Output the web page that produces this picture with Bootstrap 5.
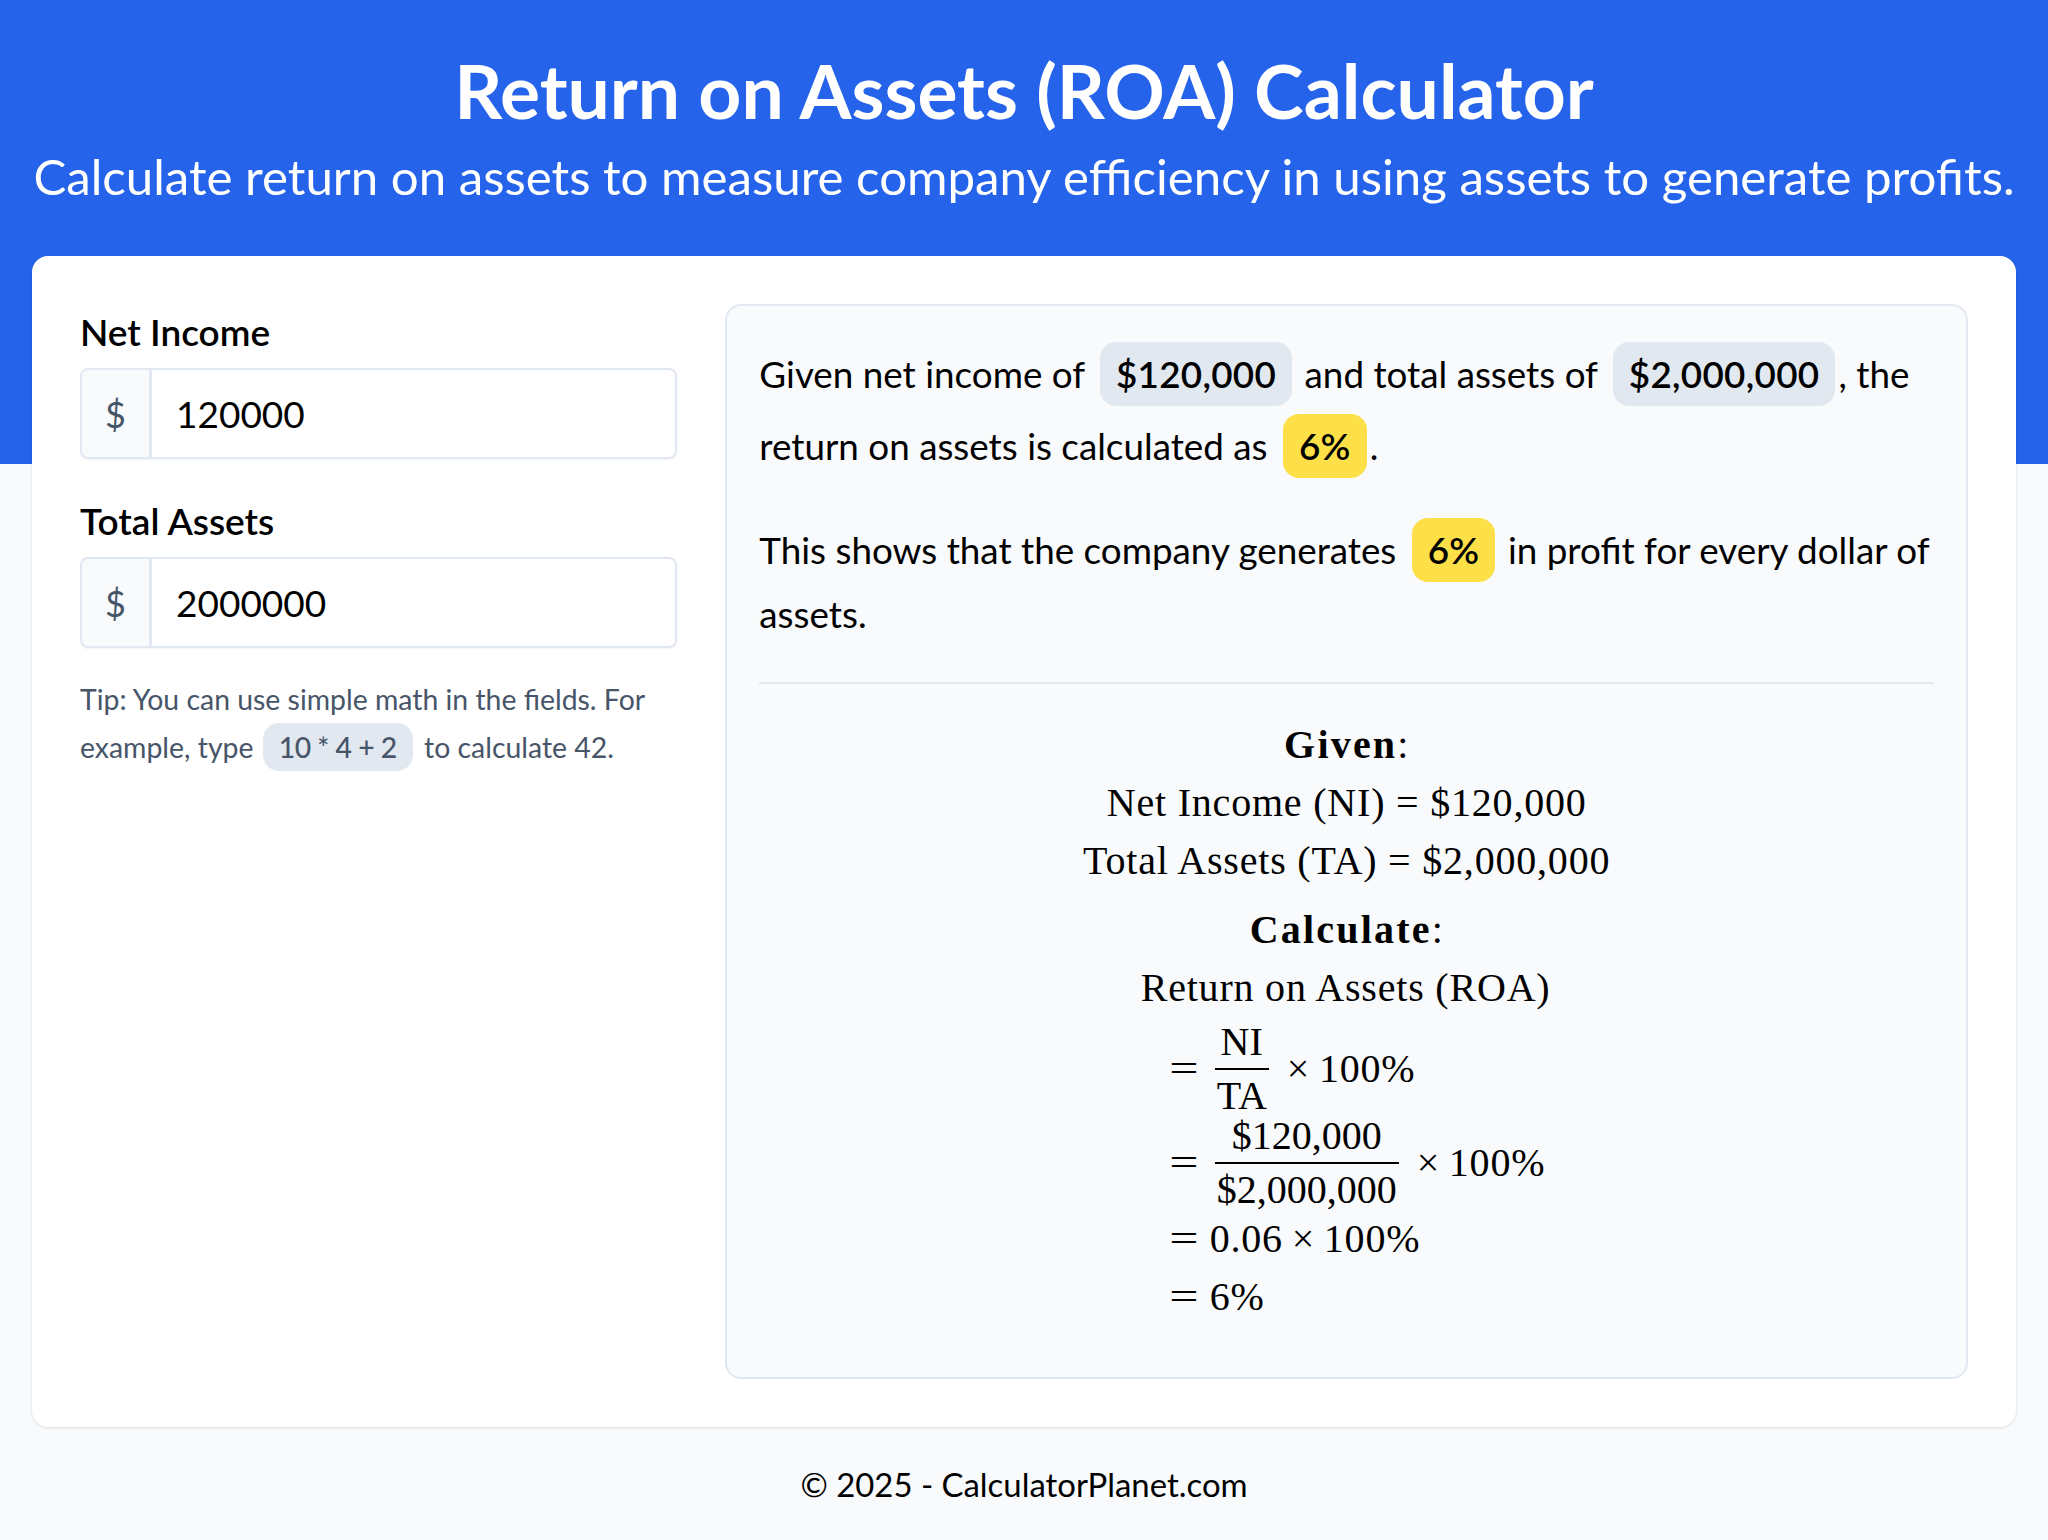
<!DOCTYPE html>
<html lang="en">
<head>
  <meta charset="UTF-8">
  <meta name="viewport" content="width=device-width, initial-scale=1.0">
  <title>Return on Assets (ROA) Calculator</title>
  <link href="https://cdn.jsdelivr.net/npm/bootstrap@5.3.0/dist/css/bootstrap.min.css" rel="stylesheet">
  <style>
    body {
      background: #f8fafc;
      color: #000;
      font-family: "Lato", sans-serif;
      font-size: 32px;
    }
    .hero {
      background: #2563eb;
      color: #fff;
      height: 464px;
      padding-top: 45px;
    }
    .hero h1 {
      font-size: 75px;
      font-weight: 700;
      line-height: 90px;
      margin: 0 0 11px;
    }
    .hero p {
      font-size: 49.2px;
      line-height: 60px;
      margin: 0;
      white-space: nowrap;
    }
    .calc-card {
      background: #fff;
      border-radius: 16px;
      box-shadow: 0 1px 3px rgba(0, 0, 0, .12);
      margin: -208px 32px 0;
      padding: 48px;
      position: relative;
      height: 1171px;
    }
    .field-label {
      display: block;
      font-size: 37px;
      font-weight: 600;
      line-height: 48px;
      margin-bottom: 12px;
      margin-top: 4px;
    }
    .field-group {
      height: 91px;
      margin-bottom: 38px;
      border-radius: 8px;
      box-shadow: 0 1px 2px rgba(0, 0, 0, .05);
    }
    .field-group .input-group-text {
      background: #f8fafc;
      border: 2px solid #e2e8f0;
      border-radius: 8px 0 0 8px;
      color: #475569;
      font-size: 36px;
      justify-content: center;
      padding: 0;
      width: 71px;
    }
    .field-group .form-control {
      border: 2px solid #e2e8f0;
      border-radius: 0 8px 8px 0;
      color: #000;
      font-size: 37px;
      padding: 0 24px;
    }
    .tip-text {
      color: #475569;
      font-size: 28.4px;
      line-height: 48px;
      margin-top: -11px;
    }
    .tip-chip {
      background: #e2e8f0;
      border-radius: 16px;
      display: inline-block;
      font-weight: 500;
      letter-spacing: -.5px;
      margin: 0 4px 0 2px;
      padding: 0 16px;
    }
    .result-panel {
      background: #f8fafc;
      border: 2px solid #e2e8f0;
      border-radius: 16px;
      height: 1075px;
      padding: 32px;
    }
    .result-text {
      font-size: 36.8px;
      line-height: 56px;
      margin: 0 0 32px;
    }
    .result-text:last-of-type { margin-bottom: 40px; }
    .val-chip {
      border-radius: 16px;
      display: inline-block;
      font-weight: 600;
      letter-spacing: .3px;
      line-height: 64px;
      margin: 4px 3px 4px 6px;
      padding: 0 16px;
    }
    .chip-money { background: #e2e8f0; }
    .chip-result { background: #fde047; }
    .result-panel hr {
      border-top: 2px solid #e2e8f0;
      margin: 0 0 32px;
      opacity: 1;
    }
    .math-block {
      font-family: "Liberation Serif", serif;
      font-size: 40px;
      letter-spacing: .8px;
      line-height: 58px;
      text-align: center;
    }
    .math-block b { letter-spacing: 2.2px; }
    .math-block b.calc-head { margin-top: 11px; }
    .math-head { margin-top: 11px; }
    .math-steps {
      margin: 0 auto;
      text-align: left;
      width: 412px;
    }
    .math-step {
      align-items: center;
      display: flex;
      gap: 12px;
      padding-left: 30px;
      white-space: nowrap;
      word-spacing: -2px;
    }
    .math-eq {
      display: inline-block;
      text-align: center;
      transform: scaleX(1.3);
      width: 27px;
    }
    .math-frac {
      display: inline-flex;
      flex-direction: column;
      letter-spacing: 0;
      line-height: 52px;
      margin: -6px 6px -6px 5px;
      text-align: center;
    }
    .math-frac > span { padding: 0 2px; }
    .math-frac > span:first-child { border-bottom: 2px solid #000; }
    .math-first { margin-top: 5px; }
    .page-foot {
      font-size: 32.9px;
      line-height: 48px;
      padding-top: 34px;
      text-align: center;
    }
  </style>
</head>
<body>
  <header class="hero text-center">
    <h1>Return on Assets (ROA) Calculator</h1>
    <p>Calculate return on assets to measure company efficiency in using assets to generate profits.</p>
  </header>

  <main class="calc-card">
    <div class="row gx-5">
      <div class="col-4">
        <label class="field-label" for="netIncome">Net Income</label>
        <div class="input-group field-group">
          <span class="input-group-text">$</span>
          <input type="text" class="form-control" id="netIncome" value="120000">
        </div>
        <label class="field-label" for="totalAssets">Total Assets</label>
        <div class="input-group field-group">
          <span class="input-group-text">$</span>
          <input type="text" class="form-control" id="totalAssets" value="2000000">
        </div>
        <p class="tip-text">Tip: You can use simple math in the fields. For example, type <span class="tip-chip">10 * 4 + 2</span> to calculate 42.</p>
      </div>
      <div class="col-8">
        <div class="result-panel">
          <p class="result-text">Given net income of <span class="val-chip chip-money">$120,000</span> and total assets of <span class="val-chip chip-money">$2,000,000</span>, the return on assets is calculated as <span class="val-chip chip-result">6%</span>.</p>
          <p class="result-text">This shows that the company generates <span class="val-chip chip-result">6%</span> in profit for every dollar of assets.</p>
          <hr>
          <div class="math-block">
            <div><b>Given</b>:</div>
            <div>Net Income (NI) = $120,000</div>
            <div>Total Assets (TA) = $2,000,000</div>
            <div class="math-head"><b>Calculate</b>:</div>
            <div class="math-steps">
              <div>Return on Assets (ROA)</div>
              <div class="math-step math-first"><span class="math-eq">=</span><span class="math-frac"><span>NI</span><span>TA</span></span> × 100%</div>
              <div class="math-step"><span class="math-eq">=</span><span class="math-frac"><span>$120,000</span><span>$2,000,000</span></span> × 100%</div>
              <div class="math-step"><span class="math-eq">=</span> 0.06 × 100%</div>
              <div class="math-step"><span class="math-eq">=</span> 6%</div>
            </div>
          </div>
        </div>
      </div>
    </div>
  </main>

  <footer class="page-foot">© 2025 - CalculatorPlanet.com</footer>

  <script src="https://cdn.jsdelivr.net/npm/bootstrap@5.3.0/dist/js/bootstrap.bundle.min.js"></script>
</body>
</html>
